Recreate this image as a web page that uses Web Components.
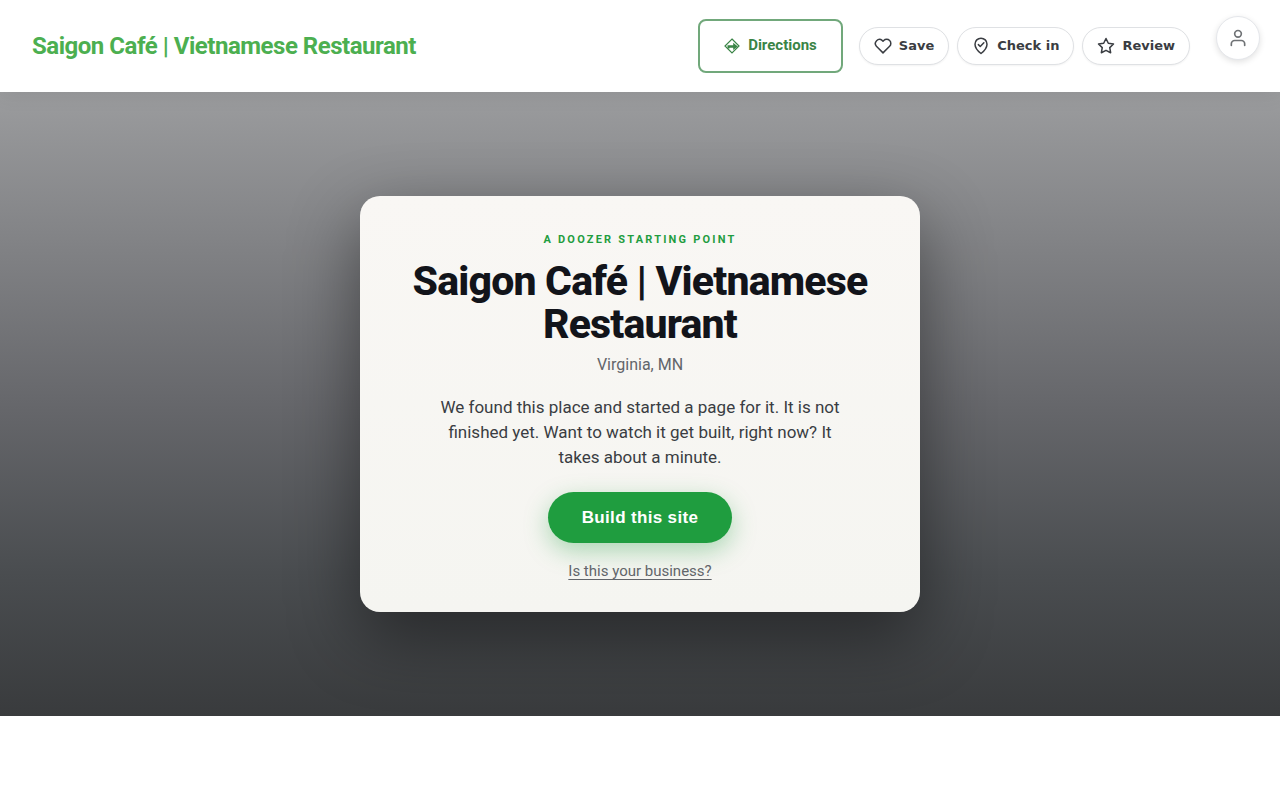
<!DOCTYPE html>
<html lang="en">
<head>
<meta charset="utf-8">
<meta name="viewport" content="width=device-width, initial-scale=1">
<title>Saigon Café | Vietnamese Restaurant</title>
<style>
  body { margin: 0; background: #fff; font-family: Roboto, "Liberation Sans", sans-serif; color: #3a3d42; }
</style>
</head>
<body>
<site-header>
  <span slot="brand">Saigon Café | Vietnamese Restaurant</span>
  <directions-button>Directions</directions-button>
  <action-group>
    <pill-button icon="heart">Save</pill-button>
    <pill-button icon="pin">Check in</pill-button>
    <pill-button icon="star">Review</pill-button>
  </action-group>
  <account-button slot="account"></account-button>
</site-header>
<main>
  <hero-section>
    <starter-card>
      <span slot="eyebrow">A Doozer starting point</span>
      <span slot="title">Saigon Café | Vietnamese Restaurant</span>
      <span slot="place">Virginia, MN</span>
      <span slot="text">We found this place and started a page for it. It is not finished yet. Want to watch it get built, right now? It takes about a minute.</span>
      <span slot="action">Build this site</span>
      <span slot="claim">Is this your business?</span>
    </starter-card>
  </hero-section>
</main>
<script>
const icons = {
  heart: '<path d="M20.8 4.6a5.5 5.5 0 0 0-7.8 0L12 5.7l-1.1-1.1a5.5 5.5 0 0 0-7.7 7.8l1 1L12 21.2l7.8-7.8 1-1a5.5 5.5 0 0 0 0-7.8z"/>',
  pin: '<path d="M12 22s8-6.500 8-12.500a8 8 0 1 0-16 0C4 15.500 12 22 12 22z"/><path d="M8.500 10.200l2.500 2.500 4.800-4.900"/>',
  star: '<path d="M12 2l3.100 6.300 6.900 1-5 4.900 1.200 6.800L12 17.800 5.800 21 7 14.200 2 9.300l6.900-1z"/>'
};

class BaseElement extends HTMLElement {
  constructor() {
    super();
    this.attachShadow({ mode: 'open' }).innerHTML = this.template();
  }
}

customElements.define('site-header', class extends BaseElement {
  template() {
    return `<style>
      :host { display: block; position: relative; z-index: 1; }
      header { display: flex; align-items: center; gap: 16px; box-sizing: border-box; min-height: 92px;
        padding: 16px 20px 16px 32px; background: #fff; box-shadow: 0 2px 20px rgba(0,0,0,.08); }
      a { margin-right: auto; color: #4caf50; font-size: 24px; font-weight: 700; line-height: 32px;
        letter-spacing: -0.02em; text-decoration: none; }
      .account { align-self: flex-start; margin-left: 10px; }
    </style>
    <header><a href="#"><slot name="brand"></slot></a><slot></slot>
      <div class="account"><slot name="account"></slot></div></header>`;
  }
});

customElements.define('directions-button', class extends BaseElement {
  template() {
    return `<style>
      :host { display: block; }
      a { display: flex; align-items: center; gap: 8px; box-sizing: border-box; height: 54px; padding: 0 24px 2px;
        border: 2px solid #71a87b; border-radius: 8px; color: #3a8446;
        font-size: 15px; font-weight: 700; line-height: 24px; text-decoration: none; }
      svg { width: 16px; height: 16px; margin-top: 2px; }
    </style>
    <a href="#"><svg viewBox="0 0 16 16" fill="none" stroke="currentColor" aria-hidden="true">
      <path d="M8 1L15 8 8 15 1 8z" stroke-width="1.2"/>
      <path d="M3.500 10.500V7.300h5.700V4.800L13.800 8.600 9.200 12V9.700H5.500v.8z" fill="currentColor" stroke="none"/>
    </svg><slot></slot></a>`;
  }
});

customElements.define('action-group', class extends BaseElement {
  template() {
    return `<style>:host { display: flex; gap: 8px; }</style><slot></slot>`;
  }
});

customElements.define('pill-button', class extends BaseElement {
  template() {
    return `<style>
      :host { display: block; }
      button { display: flex; align-items: center; gap: 7px; box-sizing: border-box; height: 38px; margin: 0; padding: 0 14px;
        border: 1px solid #dfe1e4; border-radius: 19px; background: #fff; color: #3a3d42;
        font: 600 13px/20px "DejaVu Sans", sans-serif; box-shadow: 0 1px 2px rgba(0,0,0,.05); white-space: nowrap; }
      svg { width: 18px; height: 18px; }
    </style>
    <button type="button"><svg viewBox="0 0 24 24" fill="none" stroke="currentColor" stroke-width="2"
      stroke-linecap="round" stroke-linejoin="round" aria-hidden="true">${icons[this.getAttribute('icon')]}</svg><slot></slot></button>`;
  }
});

customElements.define('account-button', class extends BaseElement {
  template() {
    return `<style>
      :host { display: block; }
      button { display: grid; place-items: center; box-sizing: border-box; width: 44px; height: 44px; padding: 0;
        border: 1px solid #e5e7eb; border-radius: 50%; background: #fff; color: #6f7275;
        box-shadow: 0 2px 6px rgba(0,0,0,.12); }
      svg { width: 20px; height: 20px; }
    </style>
    <button type="button" aria-label="Account"><svg viewBox="0 0 24 24" fill="none" stroke="currentColor" stroke-width="2"
      stroke-linecap="round" stroke-linejoin="round" aria-hidden="true">
      <path d="M20 21v-2a4 4 0 0 0-4-4H8a4 4 0 0 0-4 4v2"/><circle cx="12" cy="7" r="4"/></svg></button>`;
  }
});

customElements.define('hero-section', class extends BaseElement {
  template() {
    return `<style>
      :host { display: grid; place-items: center; box-sizing: border-box; min-height: 78vh; padding: 48px 24px;
        background: linear-gradient(#9b9c9e, #66676b 50%, #4a4d50 77%, #393b3d); }
    </style><slot></slot>`;
  }
});

customElements.define('starter-card', class extends BaseElement {
  template() {
    return `<style>
      :host { display: block; box-sizing: border-box; width: 100%; max-width: 560px; padding: 36px 40px 31px;
        border-radius: 20px; background: linear-gradient(#f9f7f4, #f5f5f1); text-align: center;
        box-shadow: 0 24px 70px rgba(0,0,0,.45); }
      p, h1 { margin: 0; }
      .eyebrow { color: #1f9d3f; font-size: 11px; font-weight: 700; line-height: 16px; letter-spacing: 0.2em; text-transform: uppercase; }
      h1 { margin-top: 12px; color: #12141a; font-size: 41px; font-weight: 800; line-height: 43px; letter-spacing: -0.02em; }
      .place { margin-top: 8px; color: #62656a; font-size: 16px; line-height: 21px; }
      .text { max-width: 420px; margin: 20px auto 0; color: #3a3d42; font-size: 17px; line-height: 25px; }
      button { display: block; height: 51px; margin: 22px auto 0; padding: 0 34px; border: 0; border-radius: 26px;
        background: #1f9d3f; color: #fff; font: 700 17px/20px "Liberation Sans", sans-serif; letter-spacing: 0.02em;
        box-shadow: 0 8px 24px rgba(31,157,63,.35); }
      .claim { margin-top: 18px; line-height: 20px; }
      .claim a { color: #62656a; font-size: 15px; text-underline-offset: 3px; }
    </style>
    <p class="eyebrow"><slot name="eyebrow"></slot></p>
    <h1><slot name="title"></slot></h1>
    <p class="place"><slot name="place"></slot></p>
    <p class="text"><slot name="text"></slot></p>
    <button type="button"><slot name="action"></slot></button>
    <p class="claim"><a href="#"><slot name="claim"></slot></a></p>`;
  }
});
</script>
</body>
</html>
